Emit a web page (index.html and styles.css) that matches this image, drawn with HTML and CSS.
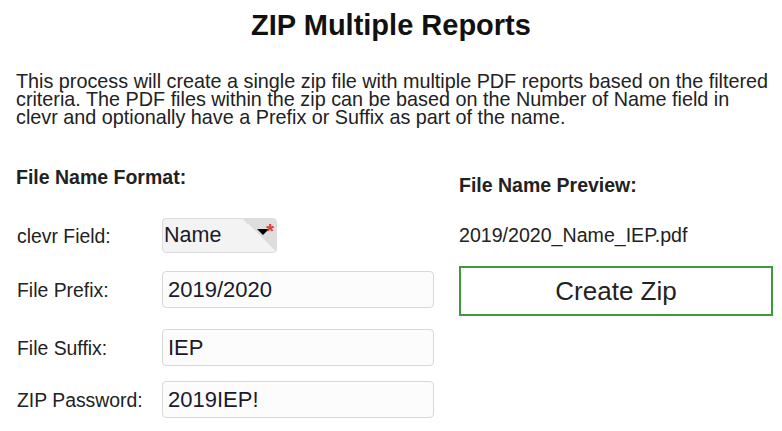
FILE: index.html
```html
<!DOCTYPE html>
<html lang="en">
<head>
<meta charset="utf-8">
<title>ZIP Multiple Reports</title>
<link rel="stylesheet" href="styles.css">
</head>
<body>
<div class="page">
  <h1 class="title">ZIP Multiple Reports</h1>
  <p class="intro">This process will create a single zip file with multiple PDF reports based on the filtered criteria. The PDF files within the zip can be based on the Number of Name field in clevr&nbsp;and optionally have a Prefix or Suffix as part of the name.</p>
  <div class="form">
    <div class="left">
      <div class="heading">File Name Format:</div>
      <div class="row row-first">
        <label class="label">clevr Field:</label>
        <div class="select">Name<span class="corner"></span><span class="arrow"></span><span class="req">*</span></div>
      </div>
      <div class="row row-prefix">
        <label class="label">File Prefix:</label>
        <input class="field" type="text" value="2019/2020">
      </div>
      <div class="row row-suffix">
        <label class="label">File Suffix:</label>
        <input class="field" type="text" value="IEP">
      </div>
      <div class="row row-pass">
        <label class="label">ZIP Password:</label>
        <input class="field" type="text" value="2019IEP!">
      </div>
    </div>
    <div class="right">
      <div class="heading heading-right">File Name Preview:</div>
      <div class="preview">2019/2020_Name_IEP.pdf</div>
      <button class="btn" type="button">Create Zip</button>
    </div>
  </div>
</div>
</body>
</html>
```

FILE: styles.css
```css
html, body {
  margin: 0;
  padding: 0;
  background: #ffffff;
}
body {
  font-family: "Liberation Sans", Arial, sans-serif;
  color: #222222;
}
.page {
  padding: 9px 0 0 16px;
  width: 766px;
}
.title {
  margin: 0;
  font-size: 29px;
  font-weight: bold;
  text-align: center;
  line-height: 32px;
  color: #111111;
  padding-right: 16px;
}
.intro {
  margin: 31px 0 0 0;
  font-size: 19.8px;
  line-height: 18px;
  width: 764px;
}
.form {
  display: flex;
  margin-top: 40px;
}
.left {
  width: 443px;
}
.right {
  width: 314px;
  display: flex;
  flex-direction: column;
}
.heading {
  font-size: 19.5px;
  font-weight: bold;
  line-height: 22px;
}
.heading-right {
  margin-top: 8px;
}
.row {
  display: flex;
  align-items: center;
}
.row-first { margin-top: 30px; }
.row-prefix { margin-top: 18px; }
.row-suffix { margin-top: 21px; }
.row-pass { margin-top: 15px; }
.label {
  width: 145px;
  font-size: 19.4px;
  line-height: 22px;
  padding-left: 1px;
}
.select {
  position: relative;
  box-sizing: border-box;
  width: 115px;
  height: 35px;
  padding-left: 1px;
  border: 1px solid #dcdcdc;
  border-radius: 4px;
  background: #f3f3f3;
  font-size: 21.5px;
  line-height: 33px;
  color: #1a1a2a;
  overflow: hidden;
}
.corner {
  position: absolute;
  top: 0;
  right: 0;
  width: 33px;
  height: 33px;
  background: linear-gradient(to top right, rgba(0,0,0,0) 50%, #dedede 50%);
}
.arrow {
  position: absolute;
  top: 10px;
  right: 7px;
  width: 0;
  height: 0;
  border-left: 6px solid transparent;
  border-right: 6px solid transparent;
  border-top: 6px solid #000000;
}
.req {
  position: absolute;
  top: 2px;
  right: 2px;
  font-size: 20px;
  line-height: 20px;
  font-weight: bold;
  color: #e23a3a;
}
.field {
  box-sizing: border-box;
  width: 272px;
  height: 37px;
  margin: 0;
  padding: 0 0 0 5px;
  border: 1px solid #d8d8d8;
  border-radius: 4px;
  background: #fcfcfc;
  font-family: "Liberation Sans", Arial, sans-serif;
  font-size: 22px;
  color: #1a1a2a;
  outline: none;
}
.preview {
  margin-top: 28px;
  font-size: 19.6px;
  line-height: 22px;
}
.btn {
  box-sizing: border-box;
  margin-top: 20px;
  width: 314px;
  height: 50px;
  border: 2px solid #3d9b3d;
  border-radius: 0;
  background: #ffffff;
  font-family: "Liberation Sans", Arial, sans-serif;
  font-size: 26px;
  color: #222222;
  padding: 0;
  cursor: pointer;
}
```
